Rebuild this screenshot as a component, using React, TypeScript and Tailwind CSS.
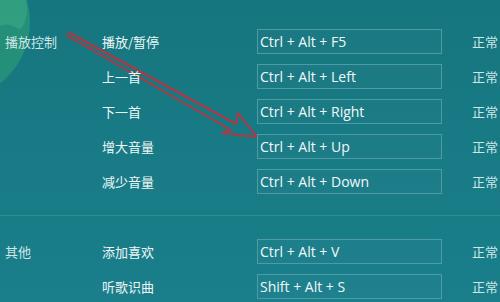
import React from "react";

type Row = { group?: string; action: string; keys: string; status: string };

const playback: Row[] = [
  { group: "播放控制", action: "播放/暂停", keys: "Ctrl + Alt + F5", status: "正常" },
  { action: "上一首", keys: "Ctrl + Alt + Left", status: "正常" },
  { action: "下一首", keys: "Ctrl + Alt + Right", status: "正常" },
  { action: "增大音量", keys: "Ctrl + Alt + Up", status: "正常" },
  { action: "减少音量", keys: "Ctrl + Alt + Down", status: "正常" },
];

const others: Row[] = [
  { group: "其他", action: "添加喜欢", keys: "Ctrl + Alt + V", status: "正常" },
  { action: "听歌识曲", keys: "Shift + Alt + S", status: "正常" },
];

function HotkeyRow({ row }: { row: Row }) {
  return (
    <div className="grid h-[25px] grid-cols-[97px_155px_185px_1fr] items-center">
      <span className="text-[13px] text-[#cfe6e6]">{row.group ?? ""}</span>
      <span className="text-[13px] text-[#eef7f7]">{row.action}</span>
      <div className="flex h-[25px] items-center border border-[#4b9da3] bg-white/[0.02] pl-[2px] font-['Open_Sans','Noto_Sans',sans-serif] text-[14px] text-[#f2f9f9]">
        {row.keys}
      </div>
      <span className="pl-[30px] text-[13px] text-[#cfe6e6]">{row.status}</span>
    </div>
  );
}

function Decorations() {
  return (
    <svg
      className="pointer-events-none absolute inset-0"
      width="500"
      height="302"
      viewBox="0 0 500 302"
    >
      <circle cx="-48" cy="22" r="78" fill="#2a9878" opacity="0.75" />
      <path d="M0 0 L26 0 Q30 18 20 30 Q10 22 0 26 Z" fill="#3fae86" opacity="0.5" />
      <g stroke="#c4303c" strokeWidth="2" fill="none" strokeLinejoin="round" opacity="0.9">
        <path d="M68 32 L236 124" />
        <path d="M66 35 L231 130" />
        <path d="M236 124 L238 113 L257 137 L222 133 L231 130" />
      </g>
    </svg>
  );
}

export default function App() {
  return (
    <div className="relative h-[302px] w-[500px] overflow-hidden bg-gradient-to-b from-[#16767f] to-[#1a7f8b] font-['Noto_Sans_CJK_SC',sans-serif]">
      <Decorations />
      <div className="relative flex flex-col pl-[5px] pt-[29px]">
        <div className="flex flex-col gap-[10px]">
          {playback.map((r) => (
            <HotkeyRow key={r.action} row={r} />
          ))}
        </div>
        <div className="mb-[23px] mt-[21px] -ml-[5px] h-px bg-[#2f8f97]" />
        <div className="flex flex-col gap-[10px]">
          {others.map((r) => (
            <HotkeyRow key={r.action} row={r} />
          ))}
        </div>
      </div>
    </div>
  );
}
